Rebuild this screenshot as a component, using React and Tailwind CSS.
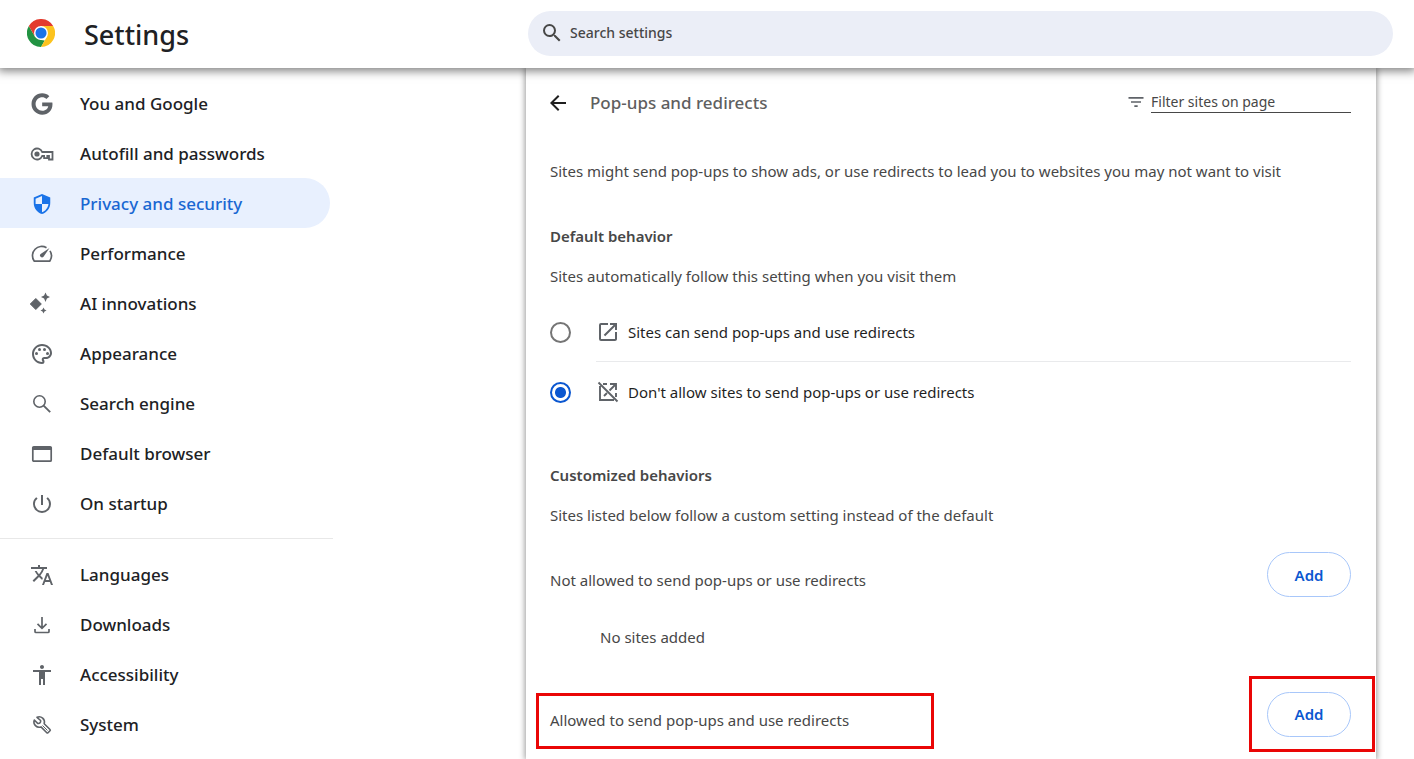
import React, { useState } from "react";
import { FaGoogle } from "react-icons/fa";
import {
  MdAccessibility,
  MdArrowBack,
  MdFilterList,
  MdOpenInNew,
  MdOutlinePalette,
  MdPowerSettingsNew,
  MdSearch,
  MdSecurity,
  MdTranslate
} from "react-icons/md";

function ChromeLogo() {
  return (
    <svg viewBox="0 0 48 48" className="size-7" aria-hidden="true">
      <path fill="#229342" d="M24 48A24 24 0 0 1 3.2 12l10.4 18L24 36l6.5.8z" />
      <path fill="#e33b2e" d="M3.2 12A24 24 0 0 1 44.8 12H24L13.6 30z" />
      <path fill="#fcc31e" d="M24 12h20.8A24 24 0 0 1 24 48l10.4-18z" />
      <circle cx="24" cy="24" r="12" fill="#fff" />
      <circle cx="24" cy="24" r="9.5" fill="#1a73e8" />
    </svg>
  );
}

function KeyIcon({ className }) {
  return (
    <svg viewBox="0 0 24 24" fill="none" stroke="currentColor" strokeWidth="1.8" className={className} aria-hidden="true">
      <path d="M12.200 10H22.500v7.500H19V14h-1.700v2.200h-3.200V14h-1.900A5.500 5.500 0 1 1 12.200 10z" />
      <circle cx="7" cy="12" r="2.600" fill="currentColor" stroke="none" />
    </svg>
  );
}

function GaugeIcon({ className }) {
  return (
    <svg viewBox="0 0 24 24" fill="none" stroke="currentColor" strokeWidth="1.7" className={className} aria-hidden="true">
      <path d="M16.500 5.800A9.200 9.200 0 0 0 4 18.700q.3.500.9.500h14.200q.6 0 .9-.5A9.200 9.200 0 0 0 20 8.900" />
      <path d="m19.500 6-8.900 5.900a2 2 0 1 0 2.900 2.900z" fill="currentColor" stroke="none" />
    </svg>
  );
}

function SparkIcon({ className }) {
  return (
    <svg viewBox="0 0 24 24" fill="currentColor" overflow="visible" className={className} aria-hidden="true">
      <path d="M5.800 6.500 11.300 12l-5.500 5.500L.3 12z" stroke="currentColor" strokeLinejoin="round" />
      <path d="m15.500.5 1.400 3.100L20 5l-3.100 1.400-1.400 3.600-1.400-3.600L11 5l3.100-1.400zM13.500 15.500l1 2 2 1-2 1-1 2-1-2-2-1 2-1z" />
    </svg>
  );
}

function MagnifierIcon({ className }) {
  return (
    <svg viewBox="0 0 24 24" fill="none" stroke="currentColor" strokeWidth="1.6" className={className} aria-hidden="true">
      <circle cx="9.500" cy="9.500" r="5.700" />
      <path d="m13.600 13.600 6.600 6.600" strokeWidth="1.900" />
    </svg>
  );
}

function WindowIcon({ className }) {
  return (
    <svg viewBox="0 0 24 24" fill="none" stroke="currentColor" strokeWidth="1.7" className={className} aria-hidden="true">
      <rect x="2.800" y="4.800" width="18.400" height="14.400" rx="1" />
      <path d="M2.500 6.500h19" strokeWidth="3" />
    </svg>
  );
}

function DownloadIcon({ className }) {
  return (
    <svg viewBox="0 0 24 24" fill="none" stroke="currentColor" strokeWidth="1.7" className={className} aria-hidden="true">
      <path d="M12 4v11M7.500 10.800l4.500 4.500 4.500-4.500M5 16v2.500q0 1 1 1h12q1 0 1-1V16" />
    </svg>
  );
}

function WrenchIcon({ className }) {
  return (
    <svg viewBox="0 0 24 24" fill="none" stroke="currentColor" strokeWidth="1.6" strokeLinejoin="round" className={className} aria-hidden="true">
      <path d="M7 4.300a5.300 5.300 0 0 1 7.200 6.400l5.800 5.800q.6.600 0 1.200l-2 2q-.6.600-1.200 0L11 13.900A5.300 5.300 0 0 1 4.300 7l3.400 3.400q1.500.3 2.300-.6.900-.8.600-2.300z" />
      <path d="m12.500 12.500 5 5" strokeWidth="1" />
    </svg>
  );
}

function OpenOffIcon({ className }) {
  return (
    <svg viewBox="0 0 24 24" fill="none" stroke="currentColor" strokeWidth="1.9" className={className} aria-hidden="true">
      <path d="M4 6v14h14M7 4h4M14 4h6v6M20 13v4M20 4l-6.500 6.500M11 13l-3 3M2.500 2.500l19 19" />
    </svg>
  );
}

const primaryLinks = [
  { label: "You and Google", icon: FaGoogle, size: "size-[22px]" },
  { label: "Autofill and passwords", icon: KeyIcon, size: "size-6" },
  { label: "Privacy and security", icon: MdSecurity, size: "size-[22px]" },
  { label: "Performance", icon: GaugeIcon, size: "size-6" },
  { label: "AI innovations", icon: SparkIcon, size: "size-6" },
  { label: "Appearance", icon: MdOutlinePalette, size: "size-6" },
  { label: "Search engine", icon: MagnifierIcon, size: "size-6" },
  { label: "Default browser", icon: WindowIcon, size: "size-6" },
  { label: "On startup", icon: MdPowerSettingsNew, size: "size-6" }
];

const secondaryLinks = [
  { label: "Languages", icon: MdTranslate, size: "size-6" },
  { label: "Downloads", icon: DownloadIcon, size: "size-6" },
  { label: "Accessibility", icon: MdAccessibility, size: "size-6" },
  { label: "System", icon: WrenchIcon, size: "size-6" }
];

function NavList({ items, active, onSelect }) {
  return (
    <ul>
      {items.map(({ label, icon: Icon, size }) => {
        const selected = label === active;
        return (
          <li key={label}>
            <a
              href="#"
              onClick={(event) => {
                event.preventDefault();
                onSelect(label);
              }}
              className={`flex h-[50px] items-center gap-[26px] rounded-r-full pt-px pl-[30px] text-[17px] font-medium ${
                selected ? "bg-[#e8f0fe] text-[#1967d2]" : "text-[#202124]"
              }`}
            >
              <span className={`flex w-6 justify-center ${selected ? "text-[#1a73e8]" : "text-[#5f6368]"}`}>
                <Icon className={size} />
              </span>
              {label}
            </a>
          </li>
        );
      })}
    </ul>
  );
}

function RadioRow({ value, checked, onChange, icon: Icon, label, divider }) {
  return (
    <label className="flex h-[60px] items-center gap-[25px] text-[#1f1f1f]">
      <input
        type="radio"
        name="popups"
        value={value}
        checked={checked}
        onChange={() => onChange(value)}
        className="m-0 size-[21px] shrink-0 appearance-none rounded-full border-2 border-[#757575] checked:border-[#0b57d0] checked:bg-[radial-gradient(circle,#0b57d0_5px,transparent_6px)]"
      />
      <span className={`flex h-full flex-1 items-center gap-2 ${divider ? "border-b border-[#e9eaec]" : ""}`}>
        <Icon className="size-6 text-[#5f6368]" />
        {label}
      </span>
    </label>
  );
}

function AddButton() {
  return (
    <button type="button" className="h-[45px] w-[84px] rounded-full border border-[#a8c7fa] font-semibold text-[#0b57d0]">
      Add
    </button>
  );
}

export default function App() {
  const [active, setActive] = useState("Privacy and security");
  const [behavior, setBehavior] = useState("block");
  const [query, setQuery] = useState("");
  const [filter, setFilter] = useState("");

  return (
    <div className="flex h-screen flex-col overflow-hidden bg-white font-['Noto_Sans','Open_Sans',sans-serif] text-[15px] leading-5 text-[#474747]">
      <header className="z-10 flex h-[68px] shrink-0 items-center bg-white pr-[21px] pb-[2px] shadow-[0_1px_9px_2px_rgba(0,0,0,0.5)]">
        <div className="flex w-[528px] shrink-0 items-center gap-[29px] pl-[27px]">
          <ChromeLogo />
          <h1 className="pt-1 text-[27px] leading-9 font-medium text-[#202124]">Settings</h1>
        </div>
        <label className="flex h-[45px] flex-1 items-center gap-[6px] rounded-full bg-[#ebeef7] pl-3">
          <MdSearch className="size-6 text-[#474747]" />
          <input
            type="text"
            aria-label="Search settings"
            placeholder="Search settings"
            value={query}
            onChange={(event) => setQuery(event.target.value)}
            className="flex-1 bg-transparent text-sm font-medium outline-none placeholder:text-[#474747]"
          />
        </label>
      </header>

      <div className="flex min-h-0 flex-1">
        <nav className="w-[333px] shrink-0 pt-[10px]">
          <div className="pr-[3px]">
            <NavList items={primaryLinks} active={active} onSelect={setActive} />
          </div>
          <hr className="my-[10px] border-[#e8e8e8]" />
          <NavList items={secondaryLinks} active={active} onSelect={setActive} />
        </nav>

        <main className="mr-[38px] ml-[193px] flex-1 pr-[25px] pl-6 shadow-[0_0_6px_1px_rgba(0,0,0,0.4)]">
          <div className="flex h-[70px] items-center">
            <button type="button" aria-label="Back" className="-ml-1 text-[#1f1f1f]">
              <MdArrowBack className="size-6" />
            </button>
            <h2 className="ml-5 flex-1 text-[17px] font-medium text-[#5f5f5f]">Pop-ups and redirects</h2>
            <label className="flex items-center gap-[5px] pb-[2px]">
              <MdFilterList className="size-5 text-[#5f6368]" />
              <input
                type="text"
                aria-label="Filter sites on page"
                placeholder="Filter sites on page"
                value={filter}
                onChange={(event) => setFilter(event.target.value)}
                className="w-[200px] border-b border-[#474747] text-sm outline-none placeholder:text-[#474747]"
              />
            </label>
          </div>

          <p className="mt-[23px]">
            Sites might send pop-ups to show ads, or use redirects to lead you to websites you may not want to visit
          </p>

          <h3 className="mt-[45px] font-semibold">Default behavior</h3>
          <p className="mt-5">Sites automatically follow this setting when you visit them</p>

          <div className="mt-4">
            <RadioRow
              value="allow"
              checked={behavior === "allow"}
              onChange={setBehavior}
              icon={MdOpenInNew}
              label="Sites can send pop-ups and use redirects"
              divider
            />
            <RadioRow
              value="block"
              checked={behavior === "block"}
              onChange={setBehavior}
              icon={OpenOffIcon}
              label="Don't allow sites to send pop-ups or use redirects"
            />
          </div>

          <h3 className="mt-[43px] font-semibold">Customized behaviors</h3>
          <p className="mt-5">Sites listed below follow a custom setting instead of the default</p>

          <div className="mt-[27px] flex items-center justify-between">
            <p className="pt-[10px]">Not allowed to send pop-ups or use redirects</p>
            <AddButton />
          </div>
          <p className="mt-[30px] pl-[50px]">No sites added</p>

          <div className="-mr-6 -ml-[14px] mt-[29px] flex items-end justify-between">
            <p className="mb-[3px] flex h-14 w-[398px] items-center border-3 border-[#ea0606] pb-[2px] pl-[11px]">
              Allowed to send pop-ups and use redirects
            </p>
            <div className="flex h-[76px] w-[126px] items-center justify-center border-3 border-[#ea0606] pr-[6px]">
              <AddButton />
            </div>
          </div>
        </main>
      </div>
    </div>
  );
}
